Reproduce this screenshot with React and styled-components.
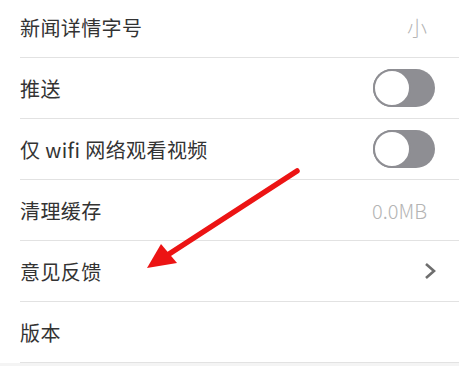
import styled, { createGlobalStyle } from 'styled-components';

const GlobalStyle = createGlobalStyle`
  html, body {
    margin: 0;
    padding: 0;
    background: #f4f4f4;
    font-family: "Noto Sans CJK SC", "Noto Sans", sans-serif;
  }
`;

const rows = [
  { label: '新闻详情字号', type: 'value', value: '小' },
  { label: '推送', type: 'toggle' },
  { label: '仅 wifi 网络观看视频', type: 'toggle' },
  { label: '清理缓存', type: 'value', value: '0.0MB' },
  { label: '意见反馈', type: 'chevron' },
  { label: '版本', type: 'none' },
];

const App = () => {
  return (
    <>
      <GlobalStyle />
      <StPage>
        <StList>
          {rows.map((row) => (
            <StRow key={row.label}>
              <StLabel>{row.label}</StLabel>
              {row.type === 'value' && <StValue>{row.value}</StValue>}
              {row.type === 'toggle' && (
                <StToggle>
                  <StKnob />
                </StToggle>
              )}
              {row.type === 'chevron' && (
                <StChevron viewBox="0 0 14 18">
                  <path d="M3 2 L11 9 L3 16" fill="none" stroke="#6e6e6e" strokeWidth="2.6" />
                </StChevron>
              )}
            </StRow>
          ))}
        </StList>
        {/* 빨간 화살표 */}
        <StArrow viewBox="0 0 459 366">
          <line x1="297" y1="171" x2="166" y2="256" stroke="#ec1414" strokeWidth="5.5" strokeLinecap="round" />
          <polygon points="147,268 161,244 177,263" fill="#ec1414" />
        </StArrow>
      </StPage>
    </>
  );
};
export default App;

const StPage = styled.div`
  position: relative;
  width: 459px;
  height: 366px;
  overflow: hidden;
`;

const StList = styled.div`
  display: flex;
  flex-direction: column;
  margin-top: -3px;
  background: #fff;
`;

const StRow = styled.div`
  display: flex;
  align-items: center;
  justify-content: space-between;
  height: 60px;
  margin-left: 20px;
  padding-right: 22px;
  border-bottom: 1px solid #e2e2e2;
  box-sizing: content-box;
`;

const StLabel = styled.span`
  font-size: 20px;
  color: #333;
  letter-spacing: 0.4px;
`;

const StValue = styled.span`
  font-size: 20px;
  color: #b4b4b4;
  margin-right: 10px;
  font-weight: 300;
`;

const StToggle = styled.div`
  display: flex;
  align-items: center;
  width: 62px;
  height: 38px;
  border-radius: 19px;
  background: #8e8e93;
  margin-right: 2px;
`;

const StKnob = styled.div`
  width: 34px;
  height: 34px;
  border-radius: 50%;
  background: #fff;
  border: 2px solid #8e8e93;
`;

const StChevron = styled.svg`
  width: 14px;
  height: 18px;
`;

const StArrow = styled.svg`
  position: absolute;
  left: 0;
  top: 0;
  width: 459px;
  height: 366px;
  pointer-events: none;
`;
